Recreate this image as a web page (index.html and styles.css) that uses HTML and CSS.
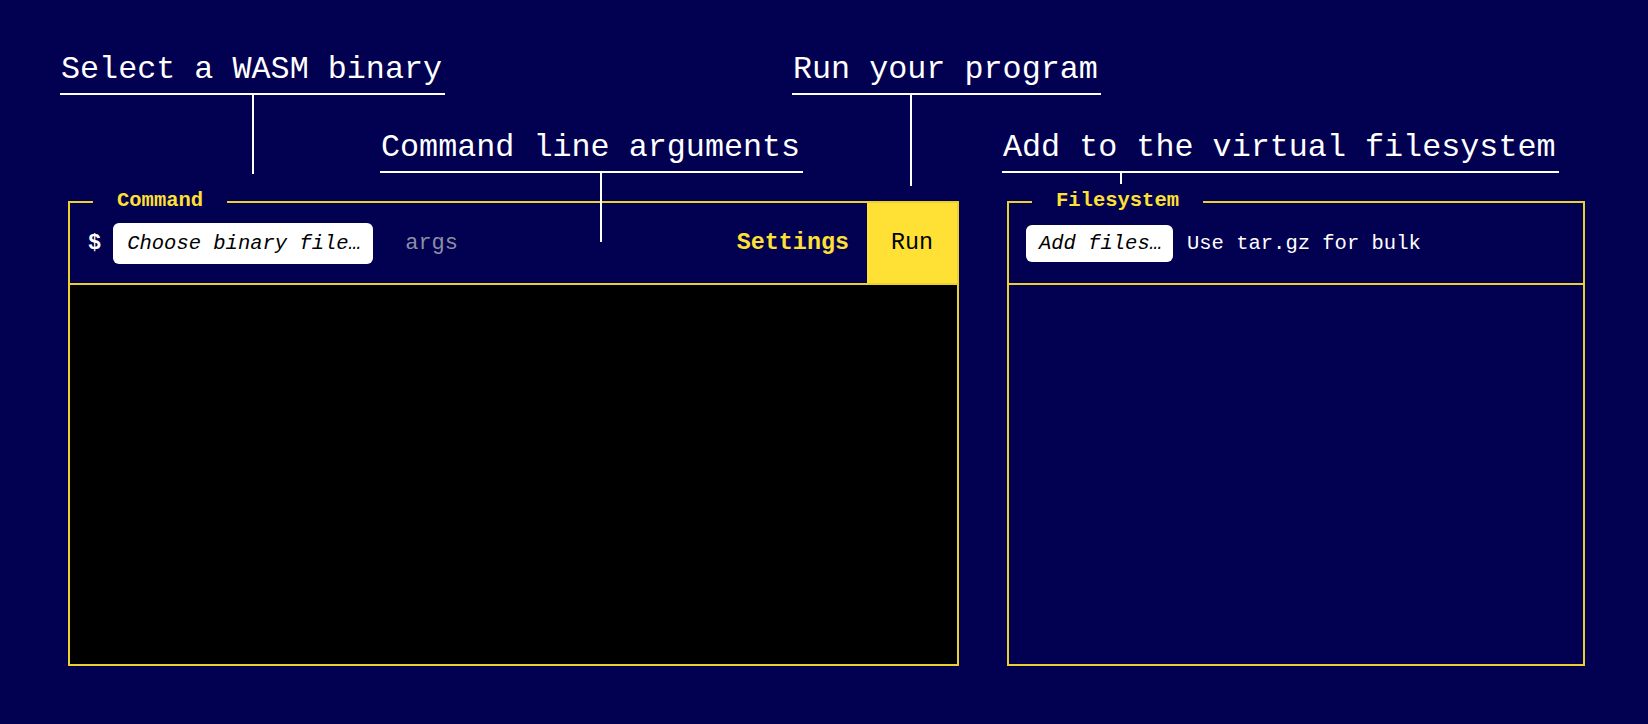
FILE: index.html
```html
<!DOCTYPE html>
<html lang="en">
<head>
<meta charset="utf-8">
<title>WASM runner</title>
<link rel="stylesheet" href="styles.css">
</head>
<body>
<div class="stage">
  <div class="panels">
    <section class="panel panel-command">
      <span class="panel-label">Command</span>
      <div class="panel-head">
        <span class="prompt">$</span>
        <button class="file-btn file-btn-binary">Choose binary file…</button>
        <span class="args">args</span>
        <span class="spacer"></span>
        <span class="settings">Settings</span>
        <button class="run-btn">Run</button>
      </div>
      <div class="terminal"></div>
    </section>
    <section class="panel panel-fs">
      <span class="panel-label">Filesystem</span>
      <div class="panel-head panel-head-fs">
        <button class="file-btn file-btn-add">Add files…</button>
        <span class="hint">Use tar.gz for bulk</span>
      </div>
      <div class="fs-body"></div>
    </section>
  </div>

  <div class="callout callout-binary">Select a WASM binary<span class="stem"></span></div>
  <div class="callout callout-run">Run your program<span class="stem"></span></div>
  <div class="callout callout-args">Command line arguments<span class="stem"></span></div>
  <div class="callout callout-fs">Add to the virtual filesystem<span class="stem"></span></div>
</div>
</body>
</html>
```

FILE: styles.css
```css
* { box-sizing: border-box; }

html, body {
  margin: 0;
  padding: 0;
  background: #020050;
}

body {
  font-family: "Liberation Mono", "DejaVu Sans Mono", monospace;
  color: #ffffff;
}

.stage {
  position: relative;
  width: 1648px;
  height: 724px;
  overflow: hidden;
}

.panels {
  display: flex;
  gap: 48px;
  padding: 201px 0 0 68px;
}

.panel {
  position: relative;
  height: 465px;
  border: 2px solid #ecd030;
  display: flex;
  flex-direction: column;
}

.panel-command { width: 891px; }
.panel-fs { width: 578px; }

.panel-label {
  position: absolute;
  top: -14px;
  left: 23px;
  padding: 0 24px 0 24px;
  background: #020050;
  color: #ffe135;
  font-weight: bold;
  font-size: 20.5px;
  line-height: 24px;
}

.panel-head {
  display: flex;
  align-items: center;
  height: 82px;
  border-bottom: 2px solid #ecd030;
  padding-left: 18px;
  flex: none;
}

.panel-head-fs {
  padding-left: 17px;
}

.prompt {
  font-weight: bold;
  font-size: 22px;
  color: #ffffff;
  margin-right: 12px;
}

.file-btn {
  font-family: "Liberation Mono", "DejaVu Sans Mono", monospace;
  font-style: italic;
  font-size: 20.5px;
  color: #000000;
  background: #ffffff;
  border: none;
  border-radius: 6px;
  text-align: left;
  margin: 0;
}

.file-btn-binary {
  width: 260px;
  height: 41px;
  padding: 0 0 0 14px;
}

.file-btn-add {
  width: 147px;
  height: 37px;
  padding: 0 0 0 13px;
}

.args {
  margin-left: 32px;
  font-size: 22px;
  color: #8b8ea6;
}

.spacer { flex: 1; }

.settings {
  color: #ffe135;
  font-size: 23.4px;
  font-weight: bold;
  margin-right: 18px;
}

.run-btn {
  align-self: stretch;
  width: 90px;
  margin: 0;
  padding: 0;
  border: none;
  background: #ffe135;
  color: #000000;
  font-family: "Liberation Mono", "DejaVu Sans Mono", monospace;
  font-size: 23.4px;
}

.hint {
  margin-left: 14px;
  font-size: 20.5px;
  color: #ffffff;
}

.terminal {
  flex: 1;
  background: #000000;
}

.fs-body {
  flex: 1;
}

/* annotation callouts */
.callout {
  position: absolute;
  font-size: 31.75px;
  line-height: 36px;
  padding: 0 3px 5px 1px;
  border-bottom: 2px solid #ffffff;
  color: #ffffff;
  white-space: nowrap;
}

.stem {
  position: absolute;
  top: 100%;
  width: 2px;
  background: #ffffff;
}

.callout-binary { left: 60px; top: 52px; }
.callout-binary .stem { left: 192px; height: 81px; }

.callout-run { left: 792px; top: 52px; }
.callout-run .stem { left: 118px; height: 93px; }

.callout-args { left: 380px; top: 130px; }
.callout-args .stem { left: 220px; height: 71px; }

.callout-fs { left: 1002px; top: 130px; }
.callout-fs .stem { left: 118px; height: 13px; }
```
